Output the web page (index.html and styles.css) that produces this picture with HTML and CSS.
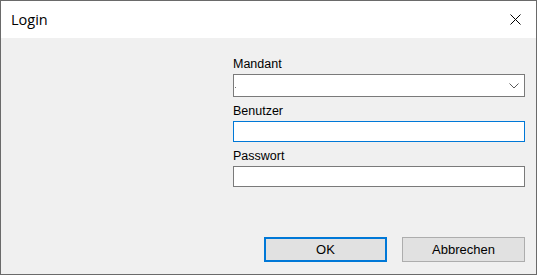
FILE: index.html
```html
<!DOCTYPE HTML>
<html lang="de">
    <head>
        <title>Login</title>
        <meta charset="UTF-8">
        <link rel="stylesheet" href="styles.css">
    </head>

    <body>
        <div class="loginWindow">
            <div class="titleBar">
                <span class="titleText">Login</span>
                <svg class="closeIcon" width="11" height="11" viewBox="0 0 11 11">
                    <path d="M0.5 0.5 L10.5 10.5 M10.5 0.5 L0.5 10.5" stroke="#000" stroke-width="1" fill="none"/>
                </svg>
            </div>

            <div class="windowContent">
                <div class="loginForm">
                    <label class="fieldLabel" for="mandant">Mandant</label>
                    <div class="comboBox" id="mandant">
                        <span class="comboDot"></span>
                        <svg class="comboArrow" width="10" height="6" viewBox="0 0 10 6">
                            <path d="M0.5 0.5 L5 5 L9.5 0.5" stroke="#5a5a5a" stroke-width="1" fill="none"/>
                        </svg>
                    </div>

                    <label class="fieldLabel spaced" for="benutzer">Benutzer</label>
                    <input type="text" id="benutzer" class="textField focused">

                    <label class="fieldLabel spaced" for="passwort">Passwort</label>
                    <input type="password" id="passwort" class="textField">
                </div>

                <div class="buttonRow">
                    <button class="dialogButton defaultButton">OK</button>
                    <button class="dialogButton">Abbrechen</button>
                </div>
            </div>
        </div>
    </body>
</html>
```

FILE: styles.css
```css
html, body
{
    margin: 0;
    padding: 0;
    width: 537px;
    height: 275px;
    overflow: hidden;
    font-family: "Liberation Sans", Arial, sans-serif;
}

.loginWindow
{
    box-sizing: border-box;
    width: 537px;
    height: 275px;
    border: 1px solid #6a6a6a;
    display: flex;
    flex-direction: column;
}

.titleBar
{
    height: 37px;
    background-color: white;
    display: flex;
    align-items: center;
    justify-content: space-between;
    padding: 0 15px 0 10px;
}

.titleText
{
    font-family: "Open Sans", "Noto Sans", sans-serif;
    font-size: 14.5px;
    color: black;
}

.closeIcon
{
    display: block;
}

.windowContent
{
    flex: 1;
    background-color: #f0f0f0;
    display: flex;
    flex-direction: column;
    padding: 19px 11px 12px 232px;
}

.loginForm
{
    display: flex;
    flex-direction: column;
}

.fieldLabel
{
    font-size: 12.5px;
    line-height: 15px;
    padding-bottom: 2px;
    color: black;
}

.fieldLabel.spaced
{
    margin-top: 7px;
}

.comboBox
{
    box-sizing: border-box;
    height: 23px;
    background-color: white;
    border: 1px solid #7a7a7a;
    display: flex;
    align-items: center;
    justify-content: space-between;
    padding: 0 5px 0 1px;
}

.comboDot
{
    width: 1px;
    height: 1px;
    margin-top: 4px;
    background-color: #777;
}

.comboArrow
{
    display: block;
}

.textField
{
    box-sizing: border-box;
    height: 21px;
    margin: 0;
    border: 1px solid #7a7a7a;
    background-color: white;
    outline: none;
}

.textField.focused
{
    border-color: #0078d7;
}

.buttonRow
{
    margin-top: auto;
    display: flex;
    justify-content: flex-end;
    gap: 15px;
}

.dialogButton
{
    box-sizing: border-box;
    width: 123px;
    height: 25px;
    margin: 0;
    padding: 0;
    background-color: #e1e1e1;
    border: 1px solid #adadad;
    font-family: "Liberation Sans", Arial, sans-serif;
    font-size: 13px;
    color: black;
}

.dialogButton.defaultButton
{
    border: 2px solid #0078d7;
}
```
